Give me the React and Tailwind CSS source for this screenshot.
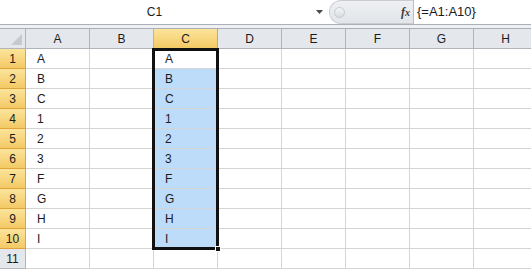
import React from "react";

const cols = ["A", "B", "C", "D", "E", "F", "G", "H"];
const colA = ["A", "B", "C", "1", "2", "3", "F", "G", "H", "I"];

export default function App() {
  const rows = Array.from({ length: 11 }, (_, i) => i + 1);
  return (
    <div
      className="w-[531px] h-[269px] overflow-hidden bg-white text-[#1b1b1b]"
      style={{ fontFamily: '"Liberation Sans", Arial, sans-serif' }}
    >
      {/* formula bar */}
      <div className="flex h-[25px] border-b border-[#a9b0b9] bg-white">
        <div className="relative flex w-[329px] items-center justify-center">
          <span className="text-[12px] pr-[20px]">C1</span>
          <svg className="absolute left-[316px] top-[10px]" width="8" height="5" viewBox="0 0 8 5">
            <path d="M0 0h7L3.5 4z" fill="#4a4a4a" />
          </svg>
        </div>
        <div className="relative flex w-[84px] items-center justify-end rounded-l-full border border-r-0 border-[#c9cdd3] bg-gradient-to-b from-[#eef0f3] to-[#e2e5e9] pr-[3px]">
          <div className="absolute left-[4px] top-[6px] h-[11px] w-[11px] rounded-full border border-[#c6cacf] bg-gradient-to-b from-[#f4f5f6] to-[#d8dbdf]" />
          <span
            className="text-[12px] italic font-bold text-[#3a3a3a]"
            style={{ fontFamily: '"Liberation Serif", serif' }}
          >
            f<span className="text-[10px]">x</span>
          </span>
        </div>
        <div className="flex flex-1 items-center border-l border-[#b9bec5] pl-[3px]">
          <span className="text-[13px]">{"{=A1:A10}"}</span>
        </div>
      </div>
      <div className="h-[4px] border-b border-[#a9b0b9] bg-[#eef0f3]" />

      {/* grid */}
      <div className="relative">
        {/* header row */}
        <div className="flex h-[20px]">
          <div className="relative w-[26px] shrink-0 border-r border-b border-[#b1b5ba] bg-[#e4e7eb]">
            <svg className="absolute right-[3px] bottom-[3px]" width="11" height="11" viewBox="0 0 11 11">
              <path d="M11 0V11H0z" fill="#c6cacf" />
            </svg>
          </div>
          {cols.map((c) => (
            <div
              key={c}
              className={
                c === "C"
                  ? "flex w-[64px] shrink-0 items-center justify-center border-r border-b border-[#e0a43a] bg-gradient-to-b from-[#fbe49a] to-[#f4c965] text-[12px]"
                  : "flex w-[64px] shrink-0 items-center justify-center border-r border-b border-[#b1b5ba] bg-[#e4e7eb] text-[12px]"
              }
            >
              {c}
            </div>
          ))}
        </div>
        {rows.map((r) => (
          <div key={r} className="flex h-[20px]">
            <div
              className={
                r <= 10
                  ? "flex w-[26px] shrink-0 items-center justify-center border-r border-b border-[#e0a43a] bg-gradient-to-b from-[#fbe49a] to-[#f4c965] text-[12px]"
                  : "flex w-[26px] shrink-0 items-center justify-center border-r border-b border-[#b1b5ba] bg-[#e4e7eb] text-[12px]"
              }
            >
              {r}
            </div>
            {cols.map((c) => {
              const inSel = c === "C" && r >= 2 && r <= 10;
              let text = "";
              if ((c === "A" || c === "C") && r <= 10) text = colA[r - 1];
              return (
                <div
                  key={c}
                  className={
                    inSel
                      ? "flex w-[64px] shrink-0 items-center border-r border-b border-[#d4d4d4] bg-[#bcdcfa] pl-[11px] text-[12px]"
                      : "flex w-[64px] shrink-0 items-center border-r border-b border-[#d4d4d4] bg-white pl-[11px] text-[12px]"
                  }
                >
                  {text}
                </div>
              );
            })}
          </div>
        ))}
        {/* selection border */}
        <div className="pointer-events-none absolute left-[152px] top-[19px] h-[202px] w-[67px] border-[3px] border-[#111]" />
        <div className="pointer-events-none absolute left-[215px] top-[217px] h-[6px] w-[6px] border border-white bg-[#111]" />
      </div>
    </div>
  );
}
